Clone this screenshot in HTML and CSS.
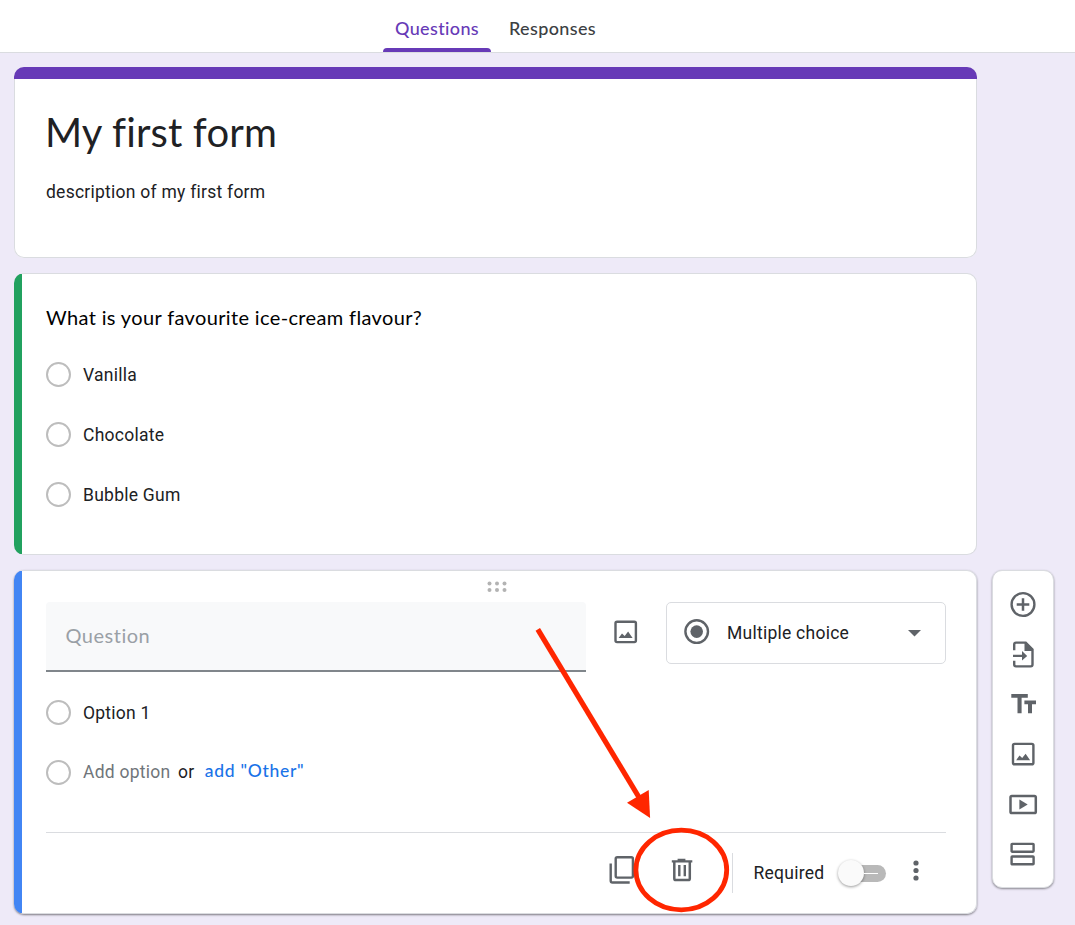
FILE: index.html
```html
<!DOCTYPE html>
<html lang="en">
<head>
<meta charset="utf-8">
<title>My first form</title>
<link rel="stylesheet" href="styles.css">
</head>
<body>
<header class="tabs">
  <div class="tab active"><span>Questions</span></div>
  <div class="tab"><span>Responses</span></div>
</header>
<main class="page">
  <div class="cards">
    <section class="card intro">
      <h1>My first form</h1>
      <p class="desc">description of my first form</p>
    </section>
    <section class="card answered">
      <h2>What is your favourite ice-cream flavour?</h2>
      <div class="option"><i class="radio"></i><span>Vanilla</span></div>
      <div class="option"><i class="radio"></i><span>Chocolate</span></div>
      <div class="option"><i class="radio"></i><span>Bubble Gum</span></div>
    </section>
    <section class="card editing">
      <svg class="grip" width="20" height="12" viewBox="0 0 20 12" fill="#b3b3b3"><circle cx="2.5" cy="2.5" r="2"/><circle cx="10" cy="2.5" r="2"/><circle cx="17.5" cy="2.5" r="2"/><circle cx="2.5" cy="9" r="2"/><circle cx="10" cy="9" r="2"/><circle cx="17.5" cy="9" r="2"/></svg>
      <div class="question-row">
        <div class="input"><span>Question</span></div>
        <svg class="picture" width="24" height="24" viewBox="0 0 24 24"><rect x="1.5" y="1.7" width="20.4" height="20.4" rx="1.6" fill="none" stroke="#5f6368" stroke-width="2.4"/><path d="M4.6 18l3.4-4.6 2.7 2.5 3.4-4.3 4.5 6.4z" fill="#5f6368"/></svg>
        <div class="select">
          <svg width="26" height="26" viewBox="0 0 26 26"><circle cx="12.7" cy="12.6" r="11.3" fill="none" stroke="#5f6368" stroke-width="2.4"/><circle cx="12.7" cy="12.6" r="6.3" fill="#5f6368"/></svg>
          <span>Multiple choice</span>
          <svg class="caret" width="13" height="7" viewBox="0 0 13 7"><path d="M0 0h13L6.5 6.5z" fill="#5f6368"/></svg>
        </div>
      </div>
      <div class="option first"><i class="radio"></i><span>Option 1</span></div>
      <div class="option add"><i class="radio"></i><span class="muted">Add option</span><span class="or">or</span><span class="other">add "Other"</span></div>
      <footer class="actions">
        <svg class="copy" width="27" height="30" viewBox="0 0 27 30" fill="none" stroke="#5f6368" stroke-width="2.4"><rect x="6.7" y="2.2" width="17.2" height="20.4" rx="1.6"/><path d="M1.7 8.5v17.2q0 1.8 1.8 1.8h17.2"/></svg>
        <svg class="trash" width="22" height="24" viewBox="0 0 22 24"><path d="M6.6 .7h7.8v1.6h6.9v2.1H.8V2.3h5.8z" fill="#5f6368"/><path d="M3.3 3.3v17.2q0 1.6 1.6 1.6h12.3q1.6 0 1.6-1.6V3.3" fill="none" stroke="#5f6368" stroke-width="2.5"/><path d="M8.3 7v11.3M13.8 7v11.3" stroke="#5f6368" stroke-width="2.4"/></svg>
        <span class="separator"></span>
        <span class="required">Required</span>
        <span class="switch"><i class="knob"></i><i class="dash"></i></span>
        <svg class="more" width="6" height="22" viewBox="0 0 6 22" fill="#5f6368"><circle cx="3" cy="3" r="2.6"/><circle cx="3" cy="10.5" r="2.6"/><circle cx="3" cy="18" r="2.6"/></svg>
      </footer>
    </section>
  </div>
  <aside class="toolbar">
    <svg viewBox="0 0 30 30"><circle cx="15" cy="14.5" r="11.4" fill="none" stroke="#5f6368" stroke-width="2.4"/><path d="M15 8.2v12.6M8.7 14.5h12.6" stroke="#5f6368" stroke-width="2.5"/></svg>
    <svg viewBox="0 0 30 30"><path d="M6.2 10.3V4.4q0-1.8 1.8-1.8h9.7l6.8 7v15q0 1.8-1.8 1.8H8q-1.8 0-1.8-1.8v-3.8" fill="none" stroke="#5f6368" stroke-width="2.4"/><path d="M16.5 2.5h2l6.5 6.8V11h-8.5zM5 16.9v-2.2h9v-3.6l5.2 4.9-5.2 4.4v-3.5z" fill="#5f6368"/></svg>
    <svg viewBox="0 0 30 30"><path d="M3.3 4h16.5v3.8h-6.2v15.4H9.5V7.8H3.3zM16.4 10.4H28v3.8h-4v9h-4v-9h-3.6z" fill="#5f6368"/></svg>
    <svg viewBox="0 0 30 30"><rect x="5" y="3.9" width="20.4" height="20.4" rx="1.6" fill="none" stroke="#5f6368" stroke-width="2.4"/><path d="M8.1 20.2l3.4-4.6 2.7 2.5 3.4-4.3 4.5 6.4z" fill="#5f6368"/></svg>
    <svg viewBox="0 0 30 30"><rect x="2.5" y="5.9" width="25.3" height="17.2" rx="1.4" fill="none" stroke="#5f6368" stroke-width="2.5"/><path d="M11.4 9.6v9.8l8.3-4.9z" fill="#5f6368"/></svg>
    <svg viewBox="0 0 30 30" fill="none" stroke="#5f6368" stroke-width="2.4"><rect x="3.6" y="3.9" width="22" height="7.8" rx=".6"/><rect x="3.6" y="16.5" width="22" height="7.8" rx=".6"/></svg>
  </aside>
</main>
<svg class="annotation" width="1075" height="925" viewBox="0 0 1075 925"><path d="M537.8 629.4L640 799" stroke="#ff2600" stroke-width="5.2"/><path d="M627 802.7l21.7-12.6 1.4 27.9z" fill="#ff2600"/><ellipse cx="681.3" cy="870" rx="45.4" ry="39.8" fill="none" stroke="#ff2600" stroke-width="4.8"/></svg>
</body>
</html>
```
FILE: styles.css
```css
* { box-sizing: border-box; }
body { margin: 0; width: 1075px; height: 925px; overflow: hidden; background: #eeeaf8; color: #202124; font: 17.5px/24px Roboto, sans-serif; letter-spacing: .25px; position: relative; }
svg { display: block; flex: none; }
h1, h2, p { margin: 0; font-weight: 400; }
h1, h2, .tab, .input, .other { font-family: Lato, sans-serif; white-space: nowrap; }
.tabs { height: 53px; display: flex; gap: 6px; padding-left: 383px; background: #fff; border-bottom: 1px solid #dadce0; }
.tab { width: 108px; height: 52px; padding: 16px 12px 0; font-size: 18px; font-weight: 500; letter-spacing: .36px; color: #3c4043; }
.tab.active { color: #673ab7; display: flex; flex-direction: column; justify-content: space-between; }
.tab.active::after { content: ""; height: 4px; margin: 0 -12px; background: #673ab7; border-radius: 4px 4px 0 0; }
.page { display: flex; align-items: flex-end; gap: 15px; padding: 14px 0 0 14px; width: 1054px; }
.cards { width: 963px; display: flex; flex-direction: column; gap: 15px; }
.card { background: #fff; border: 1px solid #dadce0; border-radius: 10px; }
.intro { height: 191px; border: 0; box-shadow: inset 0 0 0 1px #dadce0; overflow: hidden; padding: 0 32px; }
.intro::before { content: ""; display: block; height: 12px; margin: 0 -32px 26px; background: #673ab7; }
h1 { font-size: 40px; line-height: 54px; letter-spacing: .15px; margin-left: -1px; }
.desc { margin-top: 21px; }
.answered { height: 282px; border-left: 8px solid transparent; background: linear-gradient(90deg, #21a15f 8px, #fff 8px) border-box; padding: 31px 24px; }
h2 { font-size: 20px; line-height: 24px; letter-spacing: .36px; color: #000; margin-bottom: 15px; }
.option { display: flex; align-items: center; height: 60px; gap: 12px; }
.option span { padding-top: 1px; }
.radio { width: 25px; height: 25px; border: 2px solid #bdbdbd; border-radius: 50%; flex: none; }
.editing { height: 344px; border-left: 8px solid transparent; background: linear-gradient(90deg, #4285f4 8px, #fff 8px) border-box; padding: 10px 30px 0 24px; box-shadow: 0 1px 2px rgba(0,0,0,.4), 0 1px 3px rgba(0,0,0,.1); }
.grip { margin: 0 auto 0 440.5px; }
.question-row { display: flex; margin-top: 9px; align-items: flex-start; }
.input { width: 540px; height: 70px; background: #f8f9fa; border-bottom: 2px solid #80868b; border-radius: 4px 4px 0 0; padding: 21px 19.5px; font-size: 20px; letter-spacing: .5px; color: #9aa0a6; }
.picture { margin: 18px 28px 0; }
.select { width: 280px; height: 62px; margin-left: auto; border: 1px solid #dadce0; border-radius: 5px; display: flex; align-items: center; padding: 0 24px 2px 17px; }
.select span { margin-left: 17px; padding-top: 2px; }
.caret { margin: 3px 0 0 auto; }
.option.first { margin-top: 10px; }
.option.first span { padding-top: 2px; }
.option.add { gap: 0; }
.option.add span { padding: 0 0 1px; }
.muted { color: #70757a; margin-left: 12px; }
.or { margin-left: 7.5px; }
.option.add .other { color: #1a73e8; margin-left: 10.5px; font-size: 17.5px; font-weight: 500; letter-spacing: .7px; padding-bottom: 3px; }
.actions { display: flex; align-items: center; margin-top: 30px; height: 80px; border-top: 1px solid #dadce0; padding-left: 563px; }
.copy { margin-top: -5px; }
.trash { margin: -5px 0 0 35px; }
.separator { width: 1px; height: 40px; margin-left: 39px; background: #dadce0; }
.required { margin-left: 20.5px; }
.switch { width: 46px; height: 17px; border-radius: 9px; background: #b9b9b9; margin: 1px 0 0 16px; display: flex; align-items: center; flex: none; }
.knob { width: 26px; height: 26px; flex: none; border-radius: 50%; background: #fafafa; box-shadow: 0 1px 3px rgba(0,0,0,.4); margin-left: -2px; }
.dash { width: 14px; height: 1px; background: #fff; }
.more { margin: -4px 0 0 26.5px; }
.toolbar { width: 62px; height: 318px; margin-bottom: 26px; background: #fff; border: 1px solid #dadce0; border-radius: 10px; box-shadow: 0 1px 2px rgba(0,0,0,.35), 0 1px 3px rgba(0,0,0,.1); padding: 18.5px 15px; display: flex; flex-direction: column; gap: 20px; }
.toolbar svg { width: 30px; height: 30px; }
.annotation { position: absolute; left: 0; top: 0; }
```
